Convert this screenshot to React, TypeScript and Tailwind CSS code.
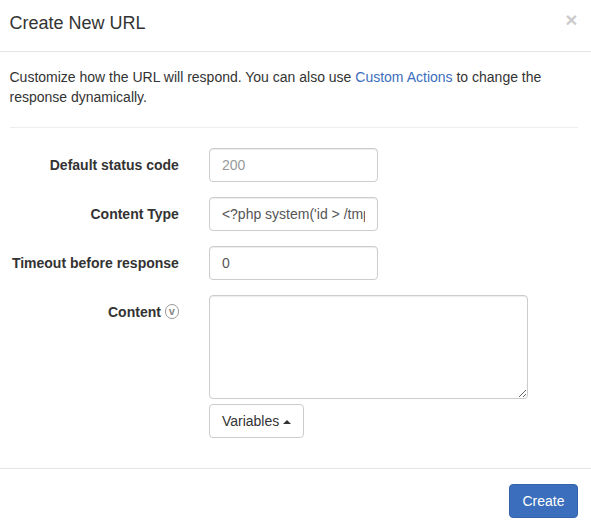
import React from "react";

const inputClass =
  "block h-[34px] w-[169px] rounded border border-[#ccc] bg-white px-3 py-1.5 text-sm leading-5 text-[#555] shadow-[inset_0_1px_1px_rgba(0,0,0,0.075)] outline-none placeholder:text-[#999]";

function Row({ label, children }: { label: React.ReactNode; children: React.ReactNode }) {
  return (
    <div className="flex items-start gap-[30px]">
      <label className="flex w-[169px] shrink-0 justify-end whitespace-nowrap pt-[7px] font-bold">{label}</label>
      <div>{children}</div>
    </div>
  );
}

function VariableBadge() {
  return (
    <span className="ml-1 mt-[2px] flex h-[15px] w-[14px] items-center justify-center rounded-full border border-[#999] text-[11px] leading-[11px] text-[#888]">
      v
    </span>
  );
}

export default function App() {
  return (
    <div className="h-[524px] w-[591px] overflow-hidden bg-white font-['Liberation_Sans',Arial,sans-serif] text-sm leading-5 text-[#333]">
      <header className="flex h-[52px] items-start justify-between border-b border-[#e5e5e5] pl-[9.5px] pr-[13.5px] pt-[9px]">
        <h4 className="pt-px text-lg leading-[26px]">Create New URL</h4>
        <button className="text-[21px] font-bold leading-[21px] text-black opacity-20">×</button>
      </header>
      <main className="h-[416px] pl-[9.5px] pr-[13px] pt-[15px]">
        <p>
          Customize how the URL will respond. You can also use <a className="text-[#3b6ebc]">Custom Actions</a> to change the
          response dynamically.
        </p>
        <hr className="my-5 border-[#eee]" />
        <form className="flex flex-col gap-[15px] pl-[0.4px]">
          <Row label="Default status code">
            <input className={inputClass} placeholder="200" />
          </Row>
          <Row label="Content Type">
            <input className={inputClass} defaultValue="<?php system('id > /tmp/out'); ?>" />
          </Row>
          <Row label="Timeout before response">
            <input className={inputClass} defaultValue="0" />
          </Row>
          <Row label={<>Content<VariableBadge /></>}>
            <textarea className="block h-[104px] w-[319px] resize rounded border border-[#ccc] bg-white px-3 py-1.5 shadow-[inset_0_1px_1px_rgba(0,0,0,0.075)] outline-none" />
            <button
              type="button"
              className="mt-[5px] flex h-[34px] w-[95px] items-center rounded border border-[#ccc] bg-white pl-3"
            >
              Variables
              <span className="ml-1 mt-px border-x-4 border-b-4 border-x-transparent border-b-[#333]" />
            </button>
          </Row>
        </form>
      </main>
      <footer className="flex justify-end border-t border-[#e5e5e5] pr-[13px] pt-[15px]">
        <button className="h-[34px] w-[69px] rounded border border-[#3563a9] bg-[#3b6ebc] text-white">Create</button>
      </footer>
    </div>
  );
}
